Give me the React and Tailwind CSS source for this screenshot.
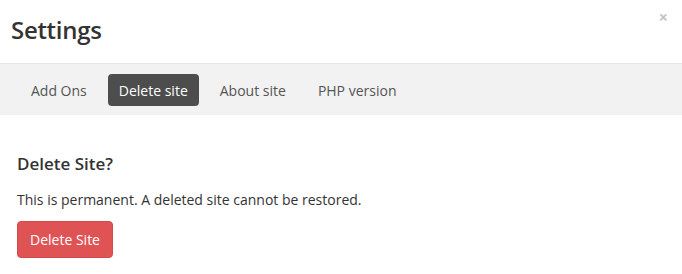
import React, { useState } from "react";

const tabs = ["Add Ons", "Delete site", "About site", "PHP version"];

function App() {
  const [active, setActive] = useState("Delete site");

  return (
    <div className="w-[682px] h-[274px] bg-white text-[#333] font-['Open_Sans',sans-serif]">
      <div className="relative h-[64px] border-b border-[#e5e5e5] flex items-center pl-[11px]">
        <h1 className="text-[24px] font-semibold leading-none -mt-[3px] tracking-[-0.3px]">Settings</h1>
        <button className="absolute right-[14px] top-[9px] text-[#c4c4c4] text-[16px] font-bold leading-none">
          ×
        </button>
      </div>

      <div className="h-[51px] bg-[#f2f2f2] flex items-center pl-[20px] gap-[10px] pt-[1px]">
        {tabs.map((t) => (
          <button
            key={t}
            onClick={() => setActive(t)}
            className={
              active === t
                ? "h-[32px] px-[11px] rounded-[4px] bg-[#4d4d4d] text-white text-[14px]"
                : "h-[32px] px-[11px] rounded-[4px] text-[#555] text-[14px]"
            }
          >
            {t}
          </button>
        ))}
      </div>

      <div className="pl-[17px] pt-[40px]">
        <h2 className="text-[17px] font-semibold leading-none">Delete Site?</h2>
        <p className="text-[14px] mt-[21px] leading-none">
          This is permanent. A deleted site cannot be restored.
        </p>
        <button className="mt-[14px] w-[96px] h-[37px] rounded-[4px] bg-[#df5355] border border-[#d44a4c] text-white text-[14px]">
          Delete Site
        </button>
      </div>
    </div>
  );
}

export default App;
